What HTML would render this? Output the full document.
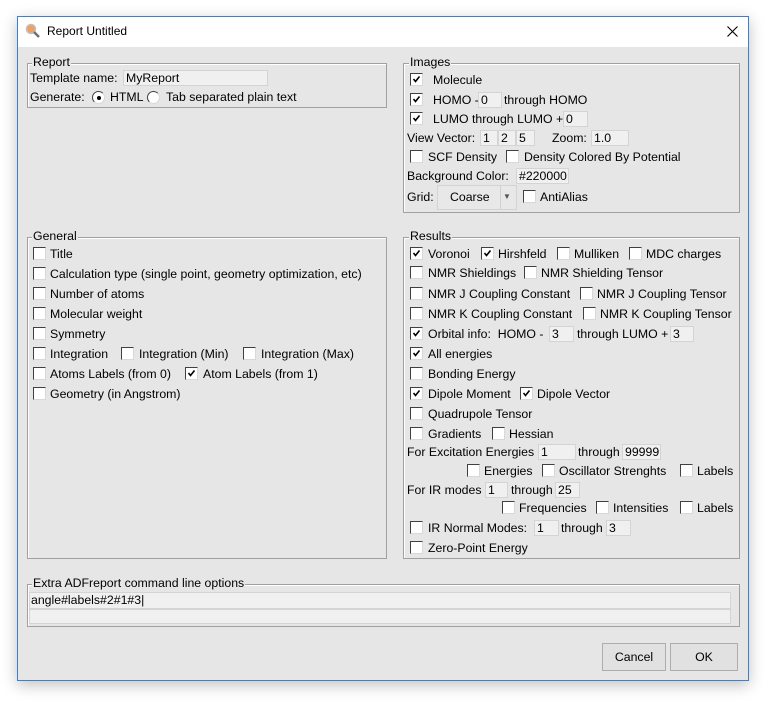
<!DOCTYPE html>
<html><head><meta charset="utf-8"><style>
body{margin:0;width:770px;height:702px;background:#fff;position:relative;overflow:hidden;font-family:"Liberation Sans",sans-serif;font-size:12.3px;color:#000}
.win{position:absolute;left:17px;top:16px;width:730px;height:663px;border:1px solid #3c7fd0;background:#e6e6e6;box-shadow:0 4px 14px rgba(0,0,0,.25)}
.tb{position:absolute;left:18px;top:17px;width:730px;height:30px;background:#fff}
.t{position:absolute;white-space:nowrap;line-height:16px;height:16px}
.fr{position:absolute;border:1px solid #a0a0a0;box-shadow:inset 1px 1px 0 #fff}
.lg{position:absolute;background:#e6e6e6;padding:0 1px;line-height:13px;white-space:nowrap}
.cb{position:absolute;width:11px;height:11px;background:#fff;border-top:1px solid #404040;border-left:1px solid #404040;border-right:1px solid #d8d8d8;border-bottom:1px solid #d8d8d8}
.cb svg{position:absolute;left:2px;top:2px}
.in{position:absolute;height:16px;background:#f0f0f0;border:1px solid #d4d4d4;line-height:15px;padding-left:2px;box-sizing:border-box;overflow:hidden;white-space:nowrap}
.btn{position:absolute;border:1px solid #adadad;background:#e1e1e1;text-align:center;line-height:26px;box-sizing:border-box}
</style></head><body>
<svg width="0" height="0" style="position:absolute"><defs><symbol id="ck" viewBox="0 0 7 7"><path d="M0.5 3 L2.5 5.5 L6.5 0.5" fill="none" stroke="#000" stroke-width="1.6"/></symbol></defs></svg>
<div class="win"></div>
<div class="tb"></div>
<svg style="position:absolute;left:25px;top:23px" width="16" height="16"><circle cx="6" cy="6" r="4.5" fill="#f0a060" stroke="#c0c0c0" stroke-width="1.5"/><path d="M9 9 L14 14" stroke="#707070" stroke-width="2.5"/></svg>
<div class="t" style="left:47px;top:23px;font-size:12px">Report Untitled</div>
<svg style="position:absolute;left:727px;top:26px" width="11" height="11"><path d="M0.5 0.5L10.5 10.5M10.5 0.5L0.5 10.5" stroke="#000" stroke-width="1.1"/></svg>

<!-- Report -->
<div class="fr" style="left:27px;top:63px;width:358px;height:43px"></div>
<div class="lg" style="left:32px;top:56px">Report</div>
<div class="t" style="left:30px;top:70px">Template name:</div>
<div class="in" style="left:123px;top:70px;width:145px">MyReport</div>
<div class="t" style="left:30px;top:89px">Generate:</div>
<div class="cb" style="left:92px;top:91px;border-radius:50%"><div style="position:absolute;left:4px;top:4px;width:4px;height:4px;background:#000;border-radius:50%"></div></div>
<div class="t" style="left:110px;top:89px">HTML</div>
<div class="cb" style="left:147px;top:91px;border-radius:50%"></div>
<div class="t" style="left:166px;top:89px">Tab separated plain text</div>

<!-- Images -->
<div class="fr" style="left:403px;top:63px;width:335px;height:148px"></div>
<div class="lg" style="left:409px;top:56px">Images</div>
<div class="cb" style="left:410px;top:73px"><svg width="7" height="7"><use href="#ck"/></svg></div><div class="t" style="left:433px;top:72px">Molecule</div>
<div class="cb" style="left:410px;top:93px"><svg width="7" height="7"><use href="#ck"/></svg></div><div class="t" style="left:433px;top:92px">HOMO -</div>
<div class="in" style="left:478px;top:92px;width:24px">0</div><div class="t" style="left:504px;top:92px">through HOMO</div>
<div class="cb" style="left:410px;top:112px"><svg width="7" height="7"><use href="#ck"/></svg></div><div class="t" style="left:433px;top:111px">LUMO through LUMO +</div>
<div class="in" style="left:563px;top:111px;width:25px">0</div>
<div class="t" style="left:407px;top:130px">View Vector:</div>
<div class="in" style="left:480px;top:130px;width:18px">1</div><div class="in" style="left:498px;top:130px;width:18px">2</div><div class="in" style="left:516px;top:130px;width:19px">5</div>
<div class="t" style="left:552px;top:130px">Zoom:</div><div class="in" style="left:591px;top:130px;width:38px">1.0</div>
<div class="cb" style="left:410px;top:150px"></div><div class="t" style="left:428px;top:149px">SCF Density</div>
<div class="cb" style="left:506px;top:150px"></div><div class="t" style="left:524px;top:149px">Density Colored By Potential</div>
<div class="t" style="left:407px;top:168px">Background Color:</div><div class="in" style="left:516px;top:168px;width:53px">#220000</div>
<div class="t" style="left:407px;top:189px">Grid:</div>
<div class="in" style="left:437px;top:185px;width:80px;height:25px;line-height:23px;padding-left:12px;background:#e8e8e8">Coarse</div>
<div style="position:absolute;left:500px;top:186px;width:1px;height:23px;background:#d0d0d0"></div>
<div class="t" style="left:503px;top:189px;font-size:8px;color:#555">▼</div>
<div class="cb" style="left:523px;top:190px"></div><div class="t" style="left:540px;top:189px">AntiAlias</div>

<!-- General -->
<div class="fr" style="left:27px;top:237px;width:358px;height:320px"></div>
<div class="lg" style="left:32px;top:230px">General</div>
<div class="cb" style="left:33px;top:247px"></div><div class="t" style="left:50px;top:246px">Title</div>
<div class="cb" style="left:33px;top:267px"></div><div class="t" style="left:50px;top:266px">Calculation type (single point, geometry optimization, etc)</div>
<div class="cb" style="left:33px;top:287px"></div><div class="t" style="left:50px;top:286px">Number of atoms</div>
<div class="cb" style="left:33px;top:307px"></div><div class="t" style="left:50px;top:306px">Molecular weight</div>
<div class="cb" style="left:33px;top:327px"></div><div class="t" style="left:50px;top:326px">Symmetry</div>
<div class="cb" style="left:33px;top:347px"></div><div class="t" style="left:50px;top:346px">Integration</div>
<div class="cb" style="left:121px;top:347px"></div><div class="t" style="left:139px;top:346px">Integration (Min)</div>
<div class="cb" style="left:243px;top:347px"></div><div class="t" style="left:261px;top:346px">Integration (Max)</div>
<div class="cb" style="left:33px;top:367px"></div><div class="t" style="left:50px;top:366px">Atoms Labels (from 0)</div>
<div class="cb" style="left:185px;top:367px"><svg width="7" height="7"><use href="#ck"/></svg></div><div class="t" style="left:203px;top:366px">Atom Labels (from 1)</div>
<div class="cb" style="left:33px;top:387px"></div><div class="t" style="left:50px;top:386px">Geometry (in Angstrom)</div>

<!-- Results -->
<div class="fr" style="left:403px;top:237px;width:335px;height:320px"></div>
<div class="lg" style="left:409px;top:230px">Results</div>
<div class="cb" style="left:410px;top:247px"><svg width="7" height="7"><use href="#ck"/></svg></div><div class="t" style="left:428px;top:246px">Voronoi</div>
<div class="cb" style="left:481px;top:247px"><svg width="7" height="7"><use href="#ck"/></svg></div><div class="t" style="left:498px;top:246px">Hirshfeld</div>
<div class="cb" style="left:557px;top:247px"></div><div class="t" style="left:574px;top:246px">Mulliken</div>
<div class="cb" style="left:629px;top:247px"></div><div class="t" style="left:646px;top:246px">MDC charges</div>
<div class="cb" style="left:410px;top:266px"></div><div class="t" style="left:428px;top:265px">NMR Shieldings</div>
<div class="cb" style="left:524px;top:266px"></div><div class="t" style="left:541px;top:265px">NMR Shielding Tensor</div>
<div class="cb" style="left:410px;top:287px"></div><div class="t" style="left:428px;top:286px">NMR J Coupling Constant</div>
<div class="cb" style="left:580px;top:287px"></div><div class="t" style="left:597px;top:286px">NMR J Coupling Tensor</div>
<div class="cb" style="left:410px;top:307px"></div><div class="t" style="left:428px;top:306px">NMR K Coupling Constant</div>
<div class="cb" style="left:583px;top:307px"></div><div class="t" style="left:600px;top:306px">NMR K Coupling Tensor</div>
<div class="cb" style="left:410px;top:327px"><svg width="7" height="7"><use href="#ck"/></svg></div><div class="t" style="left:428px;top:326px">Orbital info:&nbsp; HOMO -</div>
<div class="in" style="left:549px;top:326px;width:25px">3</div><div class="t" style="left:577px;top:326px">through LUMO +</div>
<div class="in" style="left:670px;top:326px;width:24px">3</div>
<div class="cb" style="left:410px;top:347px"><svg width="7" height="7"><use href="#ck"/></svg></div><div class="t" style="left:428px;top:346px">All energies</div>
<div class="cb" style="left:410px;top:367px"></div><div class="t" style="left:428px;top:366px">Bonding Energy</div>
<div class="cb" style="left:410px;top:387px"><svg width="7" height="7"><use href="#ck"/></svg></div><div class="t" style="left:428px;top:386px">Dipole Moment</div>
<div class="cb" style="left:520px;top:387px"><svg width="7" height="7"><use href="#ck"/></svg></div><div class="t" style="left:537px;top:386px">Dipole Vector</div>
<div class="cb" style="left:410px;top:407px"></div><div class="t" style="left:428px;top:406px">Quadrupole Tensor</div>
<div class="cb" style="left:410px;top:427px"></div><div class="t" style="left:428px;top:426px">Gradients</div>
<div class="cb" style="left:492px;top:427px"></div><div class="t" style="left:509px;top:426px">Hessian</div>
<div class="t" style="left:407px;top:444px">For Excitation Energies</div>
<div class="in" style="left:538px;top:444px;width:38px">1</div><div class="t" style="left:578px;top:444px">through</div>
<div class="in" style="left:622px;top:444px;width:39px">99999</div>
<div class="cb" style="left:467px;top:464px"></div><div class="t" style="left:484px;top:463px">Energies</div>
<div class="cb" style="left:542px;top:464px"></div><div class="t" style="left:559px;top:463px">Oscillator Strenghts</div>
<div class="cb" style="left:680px;top:464px"></div><div class="t" style="left:697px;top:463px">Labels</div>
<div class="t" style="left:407px;top:482px">For IR modes</div>
<div class="in" style="left:485px;top:482px;width:23px">1</div><div class="t" style="left:511px;top:482px">through</div>
<div class="in" style="left:555px;top:482px;width:25px">25</div>
<div class="cb" style="left:502px;top:501px"></div><div class="t" style="left:519px;top:500px">Frequencies</div>
<div class="cb" style="left:596px;top:501px"></div><div class="t" style="left:613px;top:500px">Intensities</div>
<div class="cb" style="left:680px;top:501px"></div><div class="t" style="left:697px;top:500px">Labels</div>
<div class="cb" style="left:410px;top:521px"></div><div class="t" style="left:428px;top:520px">IR Normal Modes:</div>
<div class="in" style="left:534px;top:520px;width:25px">1</div><div class="t" style="left:561px;top:520px">through</div>
<div class="in" style="left:606px;top:520px;width:25px">3</div>
<div class="cb" style="left:410px;top:541px"></div><div class="t" style="left:428px;top:540px">Zero-Point Energy</div>

<!-- Extra -->
<div class="fr" style="left:27px;top:584px;width:711px;height:41px"></div>
<div class="lg" style="left:32px;top:577px">Extra ADFreport command line options</div>
<div class="in" style="left:29px;top:592px;width:702px;height:17px;padding-left:1px">angle#labels#2#1#3|</div>
<div class="in" style="left:29px;top:609px;width:702px;height:15px"></div>

<div class="btn" style="left:602px;top:643px;width:64px;height:28px;background:#e1e1e1">Cancel</div>
<div class="btn" style="left:670px;top:643px;width:68px;height:28px;border:1px solid #adadad">OK</div>
</body></html>
